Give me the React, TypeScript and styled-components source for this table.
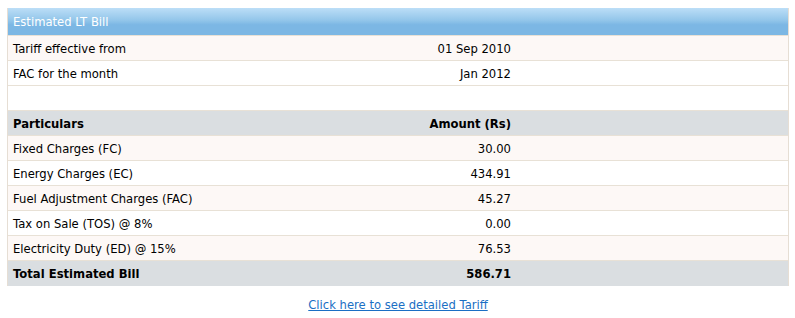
import React from 'react'
import styled, { createGlobalStyle } from 'styled-components'

const GlobalStyle = createGlobalStyle`
  body {
    margin: 0;
    background: #ffffff;
    font-family: "DejaVu Sans", Verdana, sans-serif;
    font-size: 11.6px;
    color: #000000;
  }
`

interface BillRow {
  label: string
  value: string
}

const infoRows: BillRow[] = [
  { label: 'Tariff effective from', value: '01 Sep 2010' },
  { label: 'FAC for the month', value: 'Jan 2012' },
]

const chargeRows: BillRow[] = [
  { label: 'Fixed Charges (FC)', value: '30.00' },
  { label: 'Energy Charges (EC)', value: '434.91' },
  { label: 'Fuel Adjustment Charges (FAC)', value: '45.27' },
  { label: 'Tax on Sale (TOS) @ 8%', value: '0.00' },
  { label: 'Electricity Duty (ED) @ 15%', value: '76.53' },
]

function App() {
  return (
    <Page>
      <GlobalStyle />
      <Table>
        <Title>Estimated LT Bill</Title>

        {infoRows.map((row, i) => (
          <Row key={row.label} $alt={i % 2 === 0}>
            <Label>{row.label}</Label>
            <Amount>{row.value}</Amount>
            <Spacer />
          </Row>
        ))}
        <Row $alt={false}>
          <Label />
          <Amount />
          <Spacer />
        </Row>

        <Row $head>
          <Label>Particulars</Label>
          <Amount>Amount (Rs)</Amount>
          <Spacer />
        </Row>

        {chargeRows.map((row, i) => (
          <Row key={row.label} $alt={i % 2 === 0}>
            <Label>{row.label}</Label>
            <Amount>{row.value}</Amount>
            <Spacer />
          </Row>
        ))}

        <Row $head $last>
          <Label>Total Estimated Bill</Label>
          <Amount>586.71</Amount>
          <Spacer />
        </Row>
      </Table>

      <LinkLine>
        <TariffLink href="#">Click here to see detailed Tariff</TariffLink>
      </LinkLine>
    </Page>
  )
}

const Page = styled.div`
  padding: 8px 6px 0 7px;
`

const Table = styled.div`
  border-left: 1px solid #e6ded4;
  border-right: 1px solid #e6ded4;
`

const Title = styled.div`
  height: 27px;
  display: flex;
  align-items: center;
  padding-left: 5px;
  color: #ffffff;
  background: linear-gradient(to bottom, #bcdef7 0%, #93c6ea 45%, #7cb7e4 62%, #7cb7e4 100%);
  border-bottom: 1px solid #e8e1d6;
`

const Row = styled.div<{ $alt?: boolean; $head?: boolean; $last?: boolean }>`
  display: grid;
  grid-template-columns: 300px 203px 1fr;
  height: 23px;
  padding-top: 1px;
  align-items: center;
  border-bottom: 1px solid ${p => (p.$last ? '#dadee1' : '#e8e1d6')};
  background: ${p => (p.$head ? '#dadee1' : p.$alt ? '#fdf8f6' : '#ffffff')};
  font-weight: ${p => (p.$head ? 'bold' : 'normal')};
`

const Label = styled.div`
  padding-left: 5px;
  white-space: nowrap;
`

const Amount = styled.div`
  text-align: right;
  white-space: nowrap;
`

const Spacer = styled.div``

const LinkLine = styled.div`
  text-align: center;
  margin-top: 12px;
`

const TariffLink = styled.a`
  color: #1a6fc4;
  text-decoration: underline;
`

export default App
